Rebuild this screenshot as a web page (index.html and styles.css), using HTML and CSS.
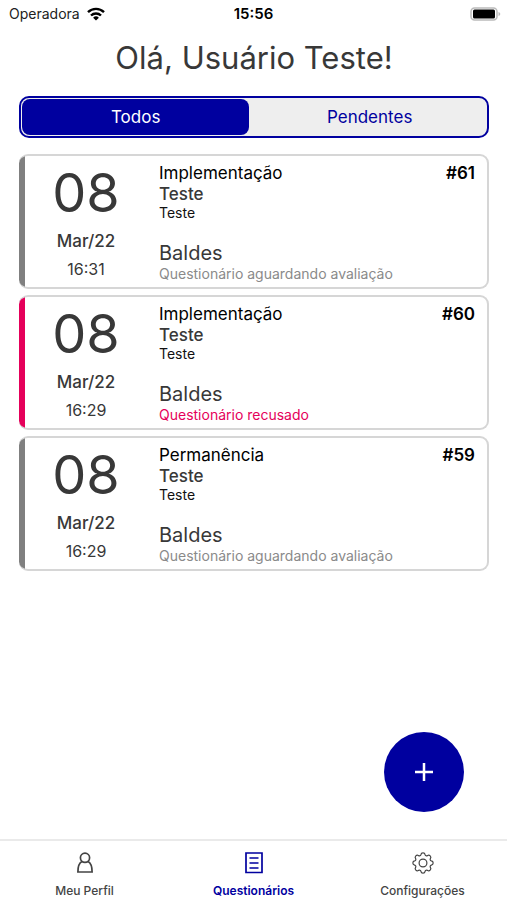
FILE: index.html
```html
<!DOCTYPE html>
<html lang="pt-BR">
<head>
<meta charset="utf-8">
<meta name="viewport" content="width=device-width, initial-scale=1">
<title>Questionários</title>
<link rel="stylesheet" href="styles.css">
</head>
<body>
<div class="statusbar">
  <span class="carrier">Operadora
    <svg class="wifi" viewBox="0 0 18 14" aria-hidden="true"><g fill="none" stroke="#000" stroke-width="2.4"><path d="M1 5.2a11.4 11.4 0 0 1 16 0"/><path d="M4 8.500a7.200 7.200 0 0 1 10 0"/></g><path d="M9 13.600 6.100 10.700a4.100 4.100 0 0 1 5.800 0z"/></svg>
  </span>
  <time class="clock">15:56</time>
  <svg class="battery" viewBox="0 0 31 14" aria-hidden="true"><rect x="1" y="1" width="26" height="12" rx="3.5" fill="#fff" stroke="#bbb" stroke-width="1.5"/><rect x="3" y="2.5" width="22" height="9" rx="1.5"/><path d="M28.5 5v4q1.8-.6 1.8-2t-1.8-2z" fill="#bbb"/></svg>
</div>
<main class="content">
  <h1 class="title">Olá, Usuário Teste!</h1>
  <div class="segments">
    <button class="segment segment-active" type="button">Todos</button>
    <button class="segment" type="button">Pendentes</button>
  </div>
  <div class="cards">
    <article class="card">
      <div class="date"><span class="day">08</span><span class="month">Mar/22</span><span class="hour">16:31</span></div>
      <div class="info">
        <div class="head"><span>Implementação</span><span class="number">#61</span></div>
        <span class="name">Teste</span><span class="detail">Teste</span>
        <span class="place">Baldes</span><span class="status">Questionário aguardando avaliação</span>
      </div>
    </article>
    <article class="card card-refused">
      <div class="date"><span class="day">08</span><span class="month">Mar/22</span><span class="hour">16:29</span></div>
      <div class="info">
        <div class="head"><span>Implementação</span><span class="number">#60</span></div>
        <span class="name">Teste</span><span class="detail">Teste</span>
        <span class="place">Baldes</span><span class="status">Questionário recusado</span>
      </div>
    </article>
    <article class="card">
      <div class="date"><span class="day">08</span><span class="month">Mar/22</span><span class="hour">16:29</span></div>
      <div class="info">
        <div class="head"><span>Permanência</span><span class="number">#59</span></div>
        <span class="name">Teste</span><span class="detail">Teste</span>
        <span class="place">Baldes</span><span class="status">Questionário aguardando avaliação</span>
      </div>
    </article>
  </div>
</main>
<button class="add" type="button" aria-label="Adicionar"><svg viewBox="0 0 18 18" aria-hidden="true"><path d="M9 0v18M0 9h18"/></svg></button>
<nav class="tabs">
  <a class="tab" href="#perfil">
    <svg viewBox="0 0 24 24" aria-hidden="true"><circle cx="12" cy="6.800" r="4.600"/><path d="M9 10.500C6 12 4.900 15 4.900 21h14.200c0-6-1.100-9-4.100-10.500"/></svg>
    Meu Perfil</a>
  <a class="tab tab-active" href="#questionarios" aria-current="page">
    <svg viewBox="0 0 24 24" aria-hidden="true"><path d="M4 2h16v19.500H4zM7.500 7h9M7.500 12h9M7.500 17h9"/></svg>
    Questionários</a>
  <a class="tab tab-settings" href="#configuracoes">
    <svg viewBox="-12 -12 24 24" aria-hidden="true"><circle r="3.900"/><path d="M8.340-2.080A2.100 2.100 0 0 1 8.340 2.080A1.600 1.600 0 0 0 7.370 4.430A2.100 2.100 0 0 1 4.430 7.370A1.600 1.600 0 0 0 2.080 8.340A2.100 2.100 0 0 1-2.080 8.340A1.600 1.600 0 0 0-4.430 7.370A2.100 2.100 0 0 1-7.370 4.430A1.600 1.600 0 0 0-8.340 2.080A2.100 2.100 0 0 1-8.340-2.080A1.600 1.600 0 0 0-7.370-4.430A2.100 2.100 0 0 1-4.430-7.370A1.600 1.600 0 0 0-2.080-8.340A2.100 2.100 0 0 1 2.080-8.340A1.600 1.600 0 0 0 4.430-7.370A2.100 2.100 0 0 1 7.370-4.430A1.600 1.600 0 0 0 8.340-2.080Z"/></svg>
    Configurações</a>
</nav>
</body>
</html>
```
FILE: styles.css
```css
* { box-sizing: border-box; }

body {
  margin: 0;
  min-height: 100vh;
  display: flex;
  flex-direction: column;
  background: #fff;
  color: #383838;
  font-family: Inter, "Liberation Sans", sans-serif;
}

button { border: 0; padding: 0; font: inherit; cursor: pointer; }

.statusbar {
  display: grid;
  grid-template-columns: 1fr auto 1fr;
  align-items: center;
  height: 27px;
  padding: 0 6px;
  font-size: 14px;
  color: #222;
}
.carrier { display: flex; align-items: center; gap: 7px; padding-left: 3px; }
.wifi { width: 18px; height: 14px; }
.clock { font-size: 15px; font-weight: 600; color: #000; }
.battery { width: 31px; height: 14px; justify-self: end; }

.content { flex: 1; padding: 9px 18px 0 19px; }

.title {
  margin: 0 0 16px;
  font-size: 31px;
  line-height: 44px;
  font-weight: 400;
  text-align: center;
}

.segments {
  display: flex;
  gap: 4px;
  height: 42px;
  margin-bottom: 16px;
  padding: 1px;
  border: 2px solid #00009f;
  border-radius: 10px;
  background: #eee;
}
.segment {
  flex: 1;
  border-radius: 8px;
  background: transparent;
  color: #00009f;
  font-size: 17px;
}
.segment-active { flex: 0 0 49%; background: #00009f; color: #fff; }

.cards { display: flex; flex-direction: column; gap: 6px; }
.card {
  --mark: #808080;
  display: grid;
  grid-template-columns: 122px 1fr;
  column-gap: 12px;
  padding: 7px 12px 4px 6px;
  border: 2px solid #d6d6d6;
  border-left-width: 0;
  border-radius: 9px;
  background: linear-gradient(to right, var(--mark) 6px, #fff 6px);
}
.card-refused { --mark: #e5005a; }

.date { display: flex; flex-direction: column; align-items: center; }
.day { font-size: 54px; line-height: 60px; }
.month { margin-top: 6px; font-size: 17px; line-height: 24px; font-weight: 500; }
.hour { margin-top: 4px; font-size: 16px; line-height: 24px; }

.info { display: flex; flex-direction: column; }
.head {
  display: flex;
  justify-content: space-between;
  font-size: 17px;
  line-height: 20px;
  color: #000;
}
.number { font-weight: 600; }
.name { font-size: 17px; line-height: 22px; font-weight: 500; }
.detail { font-size: 14px; line-height: 16px; color: #111; }
.place { margin-top: 20px; font-size: 20px; line-height: 24px; }
.status { font-size: 14px; line-height: 18px; color: #8a8a8a; }
.card-refused .status { color: #e5005a; }

.add {
  position: fixed;
  right: 43px;
  bottom: 88px;
  width: 80px;
  height: 80px;
  display: grid;
  place-items: center;
  border-radius: 50%;
  background: #00009f;
}
.add svg { width: 18px; height: 18px; stroke: #fff; stroke-width: 2.5; }

.tabs {
  display: flex;
  height: 61px;
  border-top: 2px solid #eaeaea;
}
.tab {
  flex: 1;
  display: flex;
  flex-direction: column;
  align-items: center;
  gap: 8px;
  padding-top: 10px;
  color: #444;
  font-size: 12px;
  line-height: 16px;
  font-weight: 500;
  text-decoration: none;
}
.tab svg { width: 24px; height: 24px; fill: none; stroke: currentColor; stroke-width: 1.7; }
.tab-active { color: #00009f; font-weight: 600; }
.tab-settings svg { stroke-width: 1.2; }
```
